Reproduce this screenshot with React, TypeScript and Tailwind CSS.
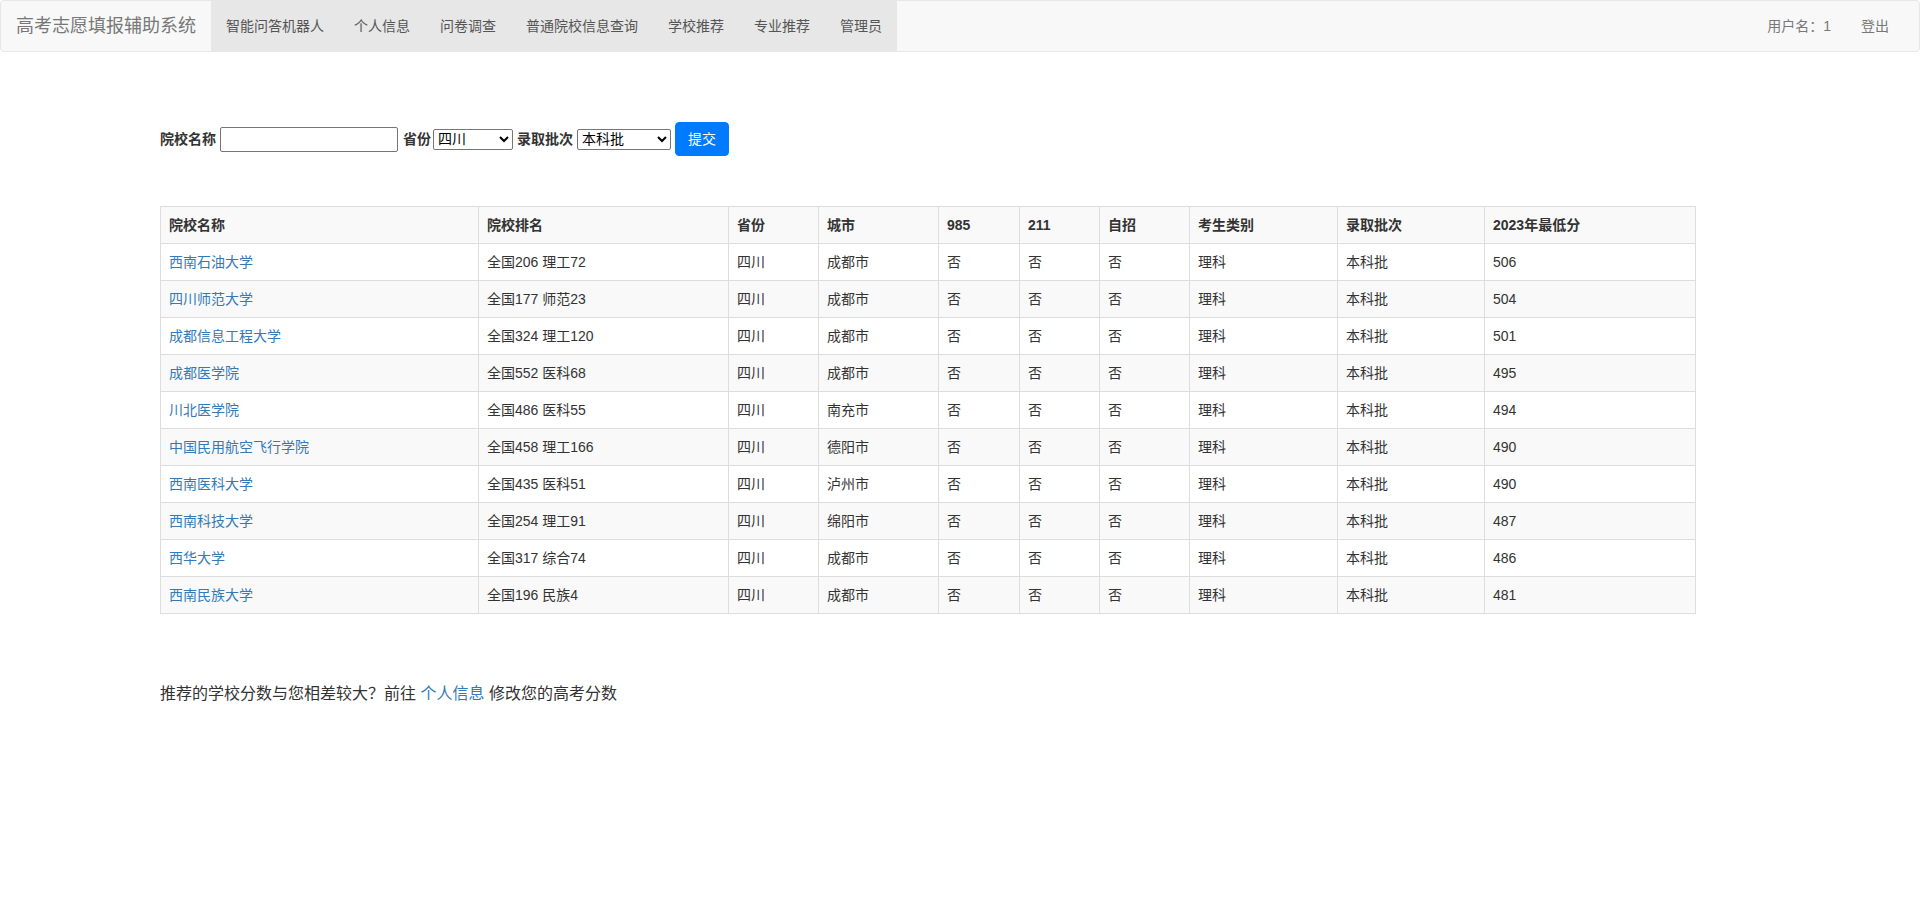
import React from 'react';

const font = { fontFamily: '"Liberation Sans", "Noto Sans CJK SC", sans-serif' };

const navLinks = ['智能问答机器人', '个人信息', '问卷调查', '普通院校信息查询', '学校推荐', '专业推荐', '管理员'];

const headers = ['院校名称', '院校排名', '省份', '城市', '985', '211', '自招', '考生类别', '录取批次', '2023年最低分'];
const colWidths = ['w-[318px]', 'w-[250px]', 'w-[90px]', 'w-[120px]', 'w-[81px]', 'w-[80px]', 'w-[90px]', 'w-[148px]', 'w-[147px]', 'w-[211px]'];

const schools = [
  ['西南石油大学', '全国206 理工72', '成都市', '506'],
  ['四川师范大学', '全国177 师范23', '成都市', '504'],
  ['成都信息工程大学', '全国324 理工120', '成都市', '501'],
  ['成都医学院', '全国552 医科68', '成都市', '495'],
  ['川北医学院', '全国486 医科55', '南充市', '494'],
  ['中国民用航空飞行学院', '全国458 理工166', '德阳市', '490'],
  ['西南医科大学', '全国435 医科51', '泸州市', '490'],
  ['西南科技大学', '全国254 理工91', '绵阳市', '487'],
  ['西华大学', '全国317 综合74', '成都市', '486'],
  ['西南民族大学', '全国196 民族4', '成都市', '481']
];

function Navbar() {
  return (
    <nav className="flex h-[52px] items-stretch justify-between rounded-[4px] border border-[#e7e7e7] bg-[#f8f8f8]">
      <div className="flex items-stretch">
        <a className="flex items-center px-[15px] text-[18px] leading-[20px] text-[#777]">高考志愿填报辅助系统</a>
        <ul className="flex items-stretch bg-[#e7e7e7]">
          {navLinks.map((l) => (
            <li key={l} className="flex items-center px-[15px] text-[14px] leading-[20px] text-[#555]">
              {l}
            </li>
          ))}
        </ul>
      </div>
      <ul className="flex items-stretch pr-[15px]">
        <li className="flex items-center px-[15px] text-[14px] text-[#777]">用户名：1</li>
        <li className="flex items-center px-[15px] text-[14px] text-[#777]">登出</li>
      </ul>
    </nav>
  );
}

function SearchForm() {
  return (
    <form className="flex items-center text-[14px] text-[#333]">
      <label className="mr-[4px] font-bold">院校名称</label>
      <input className="h-[25px] w-[178px] rounded-[2px] border border-[#767676] bg-white px-[3px]" />
      <label className="ml-[5px] mr-[2px] font-bold">省份</label>
      <select className="h-[21px] w-[80px] rounded-[2px] border border-[#767676] bg-white text-[14px] text-black">
        <option>四川</option>
      </select>
      <label className="ml-[4px] mr-[4px] font-bold">录取批次</label>
      <select className="h-[21px] w-[94px] rounded-[2px] border border-[#767676] bg-white text-[14px] text-black">
        <option>本科批</option>
      </select>
      <button type="button" className="ml-[4px] h-[34px] w-[54px] rounded-[4px] border border-[#007bff] bg-[#007bff] text-[14px] leading-[20px] text-white">
        提交
      </button>
    </form>
  );
}

function SchoolTable() {
  return (
    <table className="w-[1535px] table-fixed border-collapse border border-[#ddd] text-[14px] leading-[20px] text-[#333]">
      <tbody>
        <tr className="bg-[#f9f9f9]">
          {headers.map((h, i) => (
            <th key={h} className={`${colWidths[i]} border border-[#ddd] p-[8px] text-left align-top font-bold`}>
              {h}
            </th>
          ))}
        </tr>
        {schools.map((s, i) => (
          <tr key={s[0]} className={i % 2 === 1 ? 'bg-[#f9f9f9]' : 'bg-white'}>
            <td className="border border-[#ddd] p-[8px] align-top">
              <a className="text-[#337ab7]">{s[0]}</a>
            </td>
            <td className="border border-[#ddd] p-[8px] align-top">{s[1]}</td>
            <td className="border border-[#ddd] p-[8px] align-top">四川</td>
            <td className="border border-[#ddd] p-[8px] align-top">{s[2]}</td>
            <td className="border border-[#ddd] p-[8px] align-top">否</td>
            <td className="border border-[#ddd] p-[8px] align-top">否</td>
            <td className="border border-[#ddd] p-[8px] align-top">否</td>
            <td className="border border-[#ddd] p-[8px] align-top">理科</td>
            <td className="border border-[#ddd] p-[8px] align-top">本科批</td>
            <td className="border border-[#ddd] p-[8px] align-top">{s[3]}</td>
          </tr>
        ))}
      </tbody>
    </table>
  );
}

export default function App() {
  return (
    <div className="min-h-[911px] bg-white" style={font}>
      <Navbar />
      <main className="flex flex-col items-start pl-[160px]">
        <div className="mt-[70px]">
          <SearchForm />
        </div>
        <div className="mt-[50px]">
          <SchoolTable />
        </div>
        <p className="mt-[69px] text-[16px] leading-[22px] text-[#333]">
          推荐的学校分数与您相差较大？前往 <a className="text-[#337ab7]">个人信息</a> 修改您的高考分数
        </p>
      </main>
    </div>
  );
}
